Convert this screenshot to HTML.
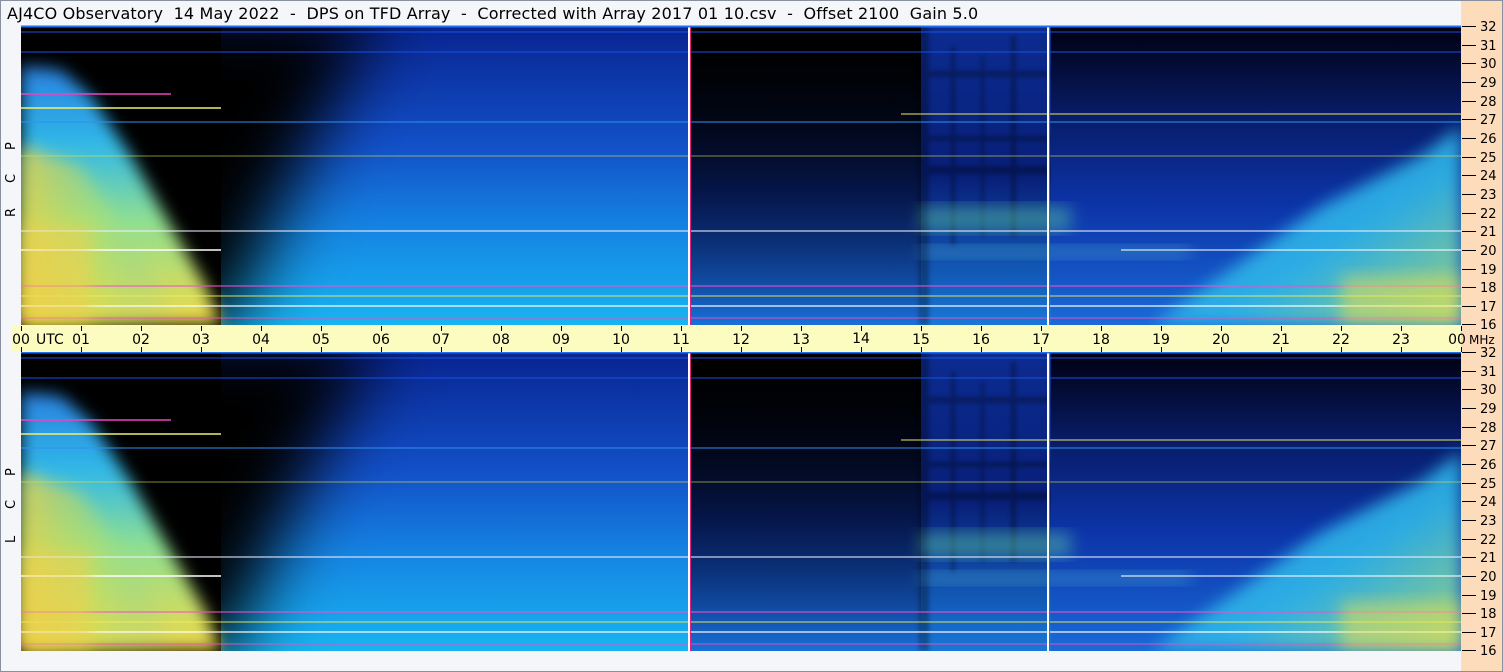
<!DOCTYPE html>
<html><head><meta charset="utf-8"><style>
html,body{margin:0;padding:0;background:#f4f6fa;width:1503px;height:672px;overflow:hidden;}
svg{display:block;font-family:"DejaVu Sans","Liberation Sans",sans-serif;overflow:hidden;}
</style></head><body>
<svg width="1503" height="672" viewBox="0 0 1503 672" xmlns="http://www.w3.org/2000/svg">
<defs>
<filter id="b25" x="-30%" y="-30%" width="160%" height="160%"><feGaussianBlur stdDeviation="35"/></filter>
<filter id="b8" x="-20%" y="-20%" width="140%" height="140%"><feGaussianBlur stdDeviation="8"/></filter>
<filter id="b2"><feGaussianBlur stdDeviation="2"/></filter>
<linearGradient id="cb" x1="0" y1="0" x2="0" y2="1">
<stop offset="0" stop-color="#082490"/><stop offset="0.4" stop-color="#1250c8"/><stop offset="0.7" stop-color="#1588e4"/><stop offset="1" stop-color="#18b4f0"/></linearGradient>
<linearGradient id="lf" x1="0" y1="0" x2="0" y2="1">
<stop offset="0" stop-color="#2a80e0"/><stop offset="0.3" stop-color="#30b8e8"/><stop offset="0.6" stop-color="#90e090"/><stop offset="1" stop-color="#f0d848"/></linearGradient>
<linearGradient id="lf2" x1="0" y1="0" x2="1" y2="0">
<stop offset="0" stop-color="#f0d040" stop-opacity="0.8"/><stop offset="0.5" stop-color="#c0e060" stop-opacity="0.4"/><stop offset="1" stop-color="#40c0e0" stop-opacity="0"/></linearGradient>
<linearGradient id="rb" x1="0" y1="0" x2="0" y2="1">
<stop offset="0" stop-color="#000010"/><stop offset="0.3" stop-color="#081c68"/><stop offset="0.6" stop-color="#0c34a8"/><stop offset="1" stop-color="#1a6ad8"/></linearGradient>
<linearGradient id="mb" x1="0" y1="0" x2="0" y2="1">
<stop offset="0" stop-color="#000" stop-opacity="0"/><stop offset="0.55" stop-color="#0a2a90" stop-opacity="0.5"/><stop offset="1" stop-color="#1870d8"/></linearGradient>
<linearGradient id="tb" x1="0" y1="0" x2="0" y2="1">
<stop offset="0" stop-color="#0c2c90"/><stop offset="0.5" stop-color="#081f78"/><stop offset="1" stop-color="#1878d8"/></linearGradient>
<linearGradient id="rc" x1="0" y1="0" x2="1" y2="1">
<stop offset="0" stop-color="#2088e0"/><stop offset="0.6" stop-color="#30b8e8"/><stop offset="1" stop-color="#b0e070"/></linearGradient>
<clipPath id="pc"><rect x="0" y="0" width="1440" height="299"/></clipPath>
<g id="plot">
<g clip-path="url(#pc)">
<rect x="0" y="0" width="1440" height="299" fill="#000"/>
<rect x="200" y="0" width="470" height="299" fill="url(#cb)"/>
<polygon points="-60,-20 360,-20 320,60 275,150 230,250 205,310 -60,310" fill="#000" filter="url(#b25)"/>
<polygon points="0,40 40,44 70,70 110,130 150,200 185,260 200,299 0,299" fill="url(#lf)" filter="url(#b8)"/>
<polygon points="0,120 60,140 100,200 140,260 160,299 0,299" fill="url(#lf2)" filter="url(#b8)"/>
<rect x="670" y="0" width="230" height="299" fill="url(#mb)"/>
<rect x="900" y="0" width="130" height="299" fill="url(#tb)"/>
<g fill="#000" opacity="0.3" filter="url(#b2)"><rect x="898" y="0" width="10" height="299"/><rect x="930" y="20" width="4" height="200"/><rect x="960" y="30" width="3" height="180"/><rect x="990" y="10" width="5" height="200"/><rect x="900" y="45" width="130" height="6"/><rect x="900" y="110" width="130" height="5"/><rect x="900" y="140" width="130" height="8"/></g>
<rect x="1030" y="0" width="410" height="299" fill="url(#rb)"/>
<polygon points="1130,299 1300,180 1400,130 1440,100 1440,299" fill="url(#rc)" opacity="0.9" filter="url(#b8)"/>
<g opacity="0.45">
<rect x="900" y="180" width="150" height="25" fill="#60d0a0" filter="url(#b8)"/>
<rect x="900" y="220" width="270" height="12" fill="#50b0d0" filter="url(#b8)"/>
</g>
<g stroke-width="1.5">
<line x1="0" y1="68" x2="150" y2="68" stroke="#f040c0"/>
<line x1="0" y1="82" x2="200" y2="82" stroke="#f0f070"/>
<line x1="0" y1="96" x2="1440" y2="96" stroke="#3090f0" stroke-width="1"/>
<line x1="880" y1="88" x2="1440" y2="88" stroke="#e0e060" opacity="0.7"/>
<line x1="0" y1="130" x2="1440" y2="130" stroke="#e0e050" stroke-width="1" opacity="0.6"/>
<line x1="0" y1="205" x2="1440" y2="205" stroke="#f0f0ff" opacity="0.7"/>
<line x1="0" y1="224" x2="200" y2="224" stroke="#ffffff"/>
<line x1="1100" y1="224" x2="1440" y2="224" stroke="#ffffff" opacity="0.7"/>
<line x1="0" y1="260" x2="1440" y2="260" stroke="#f050d0" opacity="0.7"/>
<line x1="0" y1="270" x2="1440" y2="270" stroke="#f0f060" opacity="0.6"/>
<line x1="0" y1="280" x2="1440" y2="280" stroke="#ffffff" opacity="0.8"/>
<line x1="0" y1="292" x2="1440" y2="292" stroke="#f050c0" opacity="0.6"/>
<line x1="0" y1="6" x2="1440" y2="6" stroke="#1850e0" stroke-width="1"/>
<line x1="0" y1="26" x2="1440" y2="26" stroke="#1850e0" stroke-width="1"/>
</g>
<rect x="1320" y="250" width="120" height="49" fill="#e8e050" opacity="0.5" filter="url(#b8)"/>
<rect x="0" y="200" width="70" height="99" fill="#f0d050" opacity="0.5" filter="url(#b8)"/>
</g>
<rect x="667" y="0" width="2" height="299" fill="#fff"/><rect x="669" y="0" width="1" height="299" fill="#e02080"/>
<rect x="1026" y="0" width="2" height="299" fill="#fff"/><rect x="1028" y="0" width="1" height="299" fill="#e02080"/>
<line x1="0" y1="0.5" x2="1440" y2="0.5" stroke="#2070f0" stroke-width="2"/>
</g>
</defs>
<rect x="0.5" y="0.5" width="1502" height="671" fill="#f4f6fa" stroke="#8890a0"/>
<rect x="1461" y="1" width="41" height="670" fill="#fddcbc"/>
<text x="7" y="19" font-size="16" letter-spacing="0.15" fill="#000" xml:space="preserve" style="white-space:pre">AJ4CO Observatory  14 May 2022  -  DPS on TFD Array  -  Corrected with Array 2017 01 10.csv  -  Offset 2100  Gain 5.0</text>
<use href="#plot" x="21" y="26"/>
<use href="#plot" x="21" y="352"/>
<rect x="11" y="326" width="1450" height="26" fill="#fdfcc0"/>
<g stroke="#000" stroke-width="1">
<path d="M21.5 326v5M81.5 326v5M141.5 326v5M201.5 326v5M261.5 326v5M321.5 326v5M381.5 326v5M441.5 326v5M501.5 326v5M561.5 326v5M621.5 326v5M681.5 326v5M741.5 326v5M801.5 326v5M861.5 326v5M921.5 326v5M981.5 326v5M1041.5 326v5M1101.5 326v5M1161.5 326v5M1221.5 326v5M1281.5 326v5M1341.5 326v5M1401.5 326v5M1461.5 326v5"/>
<path d="M21.5 347v5M81.5 347v5M141.5 347v5M201.5 347v5M261.5 347v5M321.5 347v5M381.5 347v5M441.5 347v5M501.5 347v5M561.5 347v5M621.5 347v5M681.5 347v5M741.5 347v5M801.5 347v5M861.5 347v5M921.5 347v5M981.5 347v5M1041.5 347v5M1101.5 347v5M1161.5 347v5M1221.5 347v5M1281.5 347v5M1341.5 347v5M1401.5 347v5M1461.5 347v5"/>
</g>
<g font-size="14" fill="#000" text-anchor="middle">
<text x="21" y="344">00</text><text x="81" y="344">01</text><text x="141" y="344">02</text><text x="201" y="344">03</text><text x="261" y="344">04</text><text x="321" y="344">05</text><text x="381" y="344">06</text><text x="441" y="344">07</text><text x="501" y="344">08</text><text x="561" y="344">09</text><text x="621" y="344">10</text><text x="681" y="344">11</text><text x="741" y="344">12</text><text x="801" y="344">13</text><text x="861" y="343">14</text><text x="921" y="344">15</text><text x="981" y="344">16</text><text x="1041" y="344">17</text><text x="1101" y="344">18</text><text x="1161" y="344">19</text><text x="1221" y="344">20</text><text x="1281" y="344">21</text><text x="1341" y="344">22</text><text x="1401" y="344">23</text><text x="1457" y="344">00</text>
</g>
<text x="36" y="344" font-size="14">UTC</text>
<text x="1469" y="344" font-size="12">MHz</text>
<g font-size="13" fill="#000" transform="rotate(-90)">
<text x="-150" y="15">P</text><text x="-183" y="15">C</text><text x="-217" y="15">R</text>
<text x="-476" y="15">P</text><text x="-509" y="15">C</text><text x="-543" y="15">L</text>
</g>
<g stroke="#000">
<path d="M1462 26.5h14M1462 45.5h14M1462 63.5h14M1462 82.5h14M1462 101.5h14M1462 119.5h14M1462 138.5h14M1462 157.5h14M1462 175.5h14M1462 194.5h14M1462 213.5h14M1462 231.5h14M1462 250.5h14M1462 269.5h14M1462 287.5h14M1462 306.5h14M1462 324.5h14"/>
<path d="M1462 352.5h14M1462 371.5h14M1462 389.5h14M1462 408.5h14M1462 427.5h14M1462 445.5h14M1462 464.5h14M1462 483.5h14M1462 501.5h14M1462 520.5h14M1462 539.5h14M1462 557.5h14M1462 576.5h14M1462 595.5h14M1462 613.5h14M1462 632.5h14M1462 650.5h14"/>
</g>
<g font-size="13" fill="#000">
<text x="1480" y="31">32</text><text x="1480" y="50">31</text><text x="1480" y="68">30</text><text x="1480" y="87">29</text><text x="1480" y="106">28</text><text x="1480" y="124">27</text><text x="1480" y="143">26</text><text x="1480" y="162">25</text><text x="1480" y="180">24</text><text x="1480" y="199">23</text><text x="1480" y="218">22</text><text x="1480" y="236">21</text><text x="1480" y="255">20</text><text x="1480" y="274">19</text><text x="1480" y="292">18</text><text x="1480" y="311">17</text><text x="1480" y="329">16</text>
<text x="1480" y="357">32</text><text x="1480" y="376">31</text><text x="1480" y="394">30</text><text x="1480" y="413">29</text><text x="1480" y="432">28</text><text x="1480" y="450">27</text><text x="1480" y="469">26</text><text x="1480" y="488">25</text><text x="1480" y="506">24</text><text x="1480" y="525">23</text><text x="1480" y="544">22</text><text x="1480" y="562">21</text><text x="1480" y="581">20</text><text x="1480" y="600">19</text><text x="1480" y="618">18</text><text x="1480" y="637">17</text><text x="1480" y="655">16</text>
</g>
</svg>
</body></html>
